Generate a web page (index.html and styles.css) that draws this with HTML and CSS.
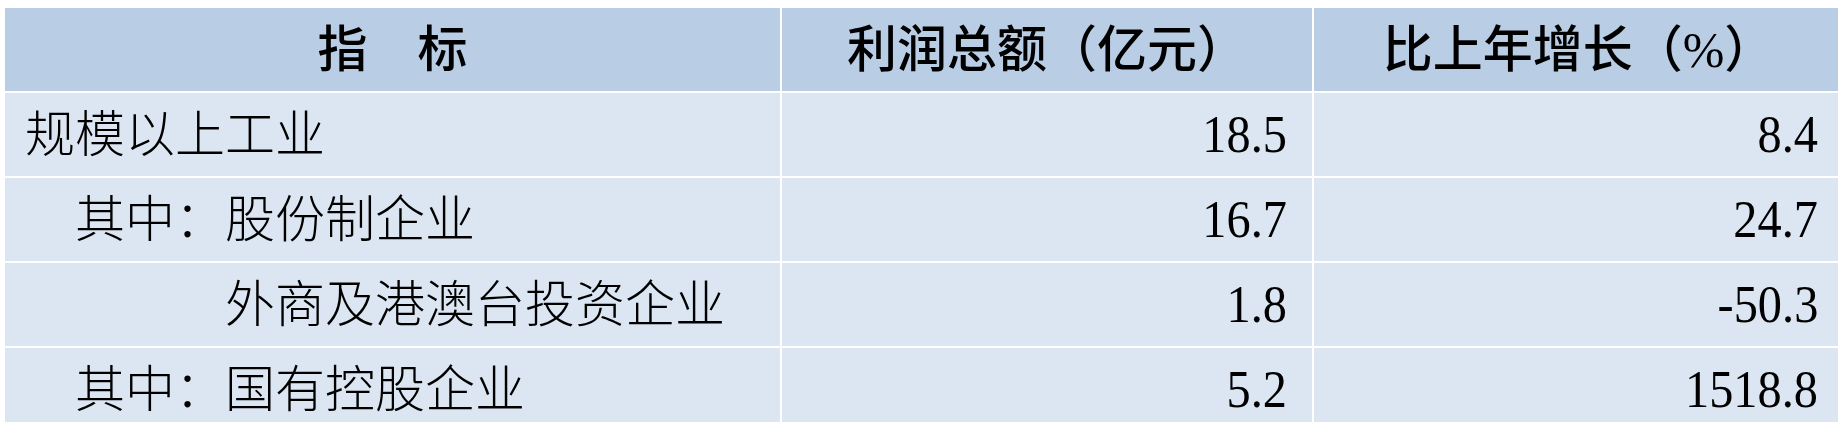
FILE: index.html
```html
<!DOCTYPE html>
<html lang="zh-CN">
<head>
<meta charset="utf-8">
<title>利润总额</title>
<link rel="stylesheet" href="styles.css">
</head>
<body>
<div class="table">
  <div class="cell head">指　标</div>
  <div class="cell head">利润总额（亿元）</div>
  <div class="cell head">比上年增长（%）</div>

  <div class="cell label">规模以上工业</div>
  <div class="cell num"><span class="val">18.5</span></div>
  <div class="cell num"><span class="val">8.4</span></div>

  <div class="cell label indent1">其中：股份制企业</div>
  <div class="cell num"><span class="val">16.7</span></div>
  <div class="cell num"><span class="val">24.7</span></div>

  <div class="cell label indent4">外商及港澳台投资企业</div>
  <div class="cell num"><span class="val">1.8</span></div>
  <div class="cell num"><span class="val">-50.3</span></div>

  <div class="cell label indent1">其中：国有控股企业</div>
  <div class="cell num"><span class="val">5.2</span></div>
  <div class="cell num"><span class="val">1518.8</span></div>
</div>
</body>
</html>
```
FILE: styles.css
```css
html, body {
  margin: 0;
  overflow: hidden;
  background: #ffffff;
}
body {
  padding: 8px 0 0 5px;
  font-family: "Liberation Serif", "Noto Sans CJK SC", serif;
  color: #000000;
}
.table {
  display: grid;
  grid-template-columns: 775px 530px 529px;
  grid-auto-rows: 83px;
  gap: 2px;
  width: 1838px;
}
.cell {
  display: flex;
  align-items: center;
  background: #dce6f2;
  font-size: 50px;
  line-height: 1;
  white-space: nowrap;
}
.head {
  background: #b9cde5;
  justify-content: center;
  font-weight: 500;
}
.label {
  padding-left: 20px;
  font-weight: 300;
}
.indent1 {
  padding-left: 70px;
}
.indent4 {
  padding-left: 220px;
}
.num {
  justify-content: flex-end;
  padding-right: 25px;
  font-size: 52px;
}
.val {
  display: inline-block;
  transform: scaleX(0.93);
  transform-origin: right center;
}
```
